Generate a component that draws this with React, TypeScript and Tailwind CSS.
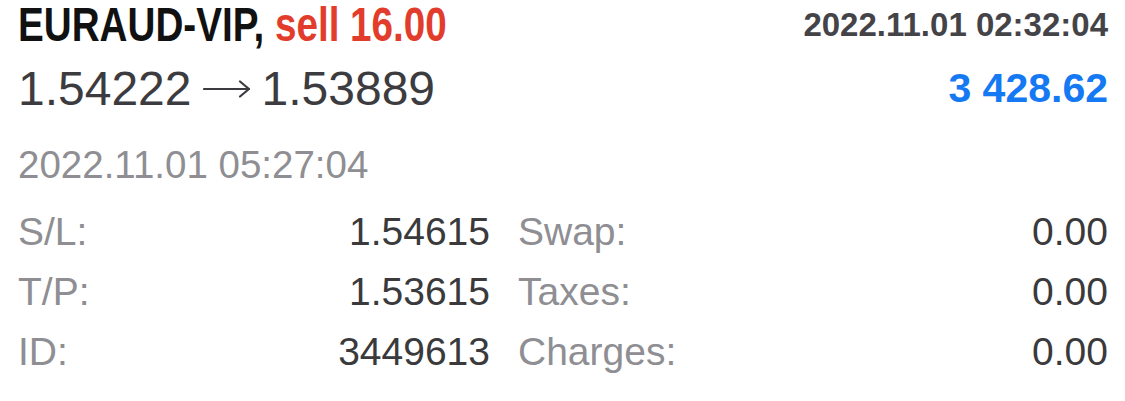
import React from 'react';

const rows = [
  { label: 'S/L:', value: '1.54615', label2: 'Swap:', value2: '0.00' },
  { label: 'T/P:', value: '1.53615', label2: 'Taxes:', value2: '0.00' },
  { label: 'ID:', value: '3449613', label2: 'Charges:', value2: '0.00' },
];

export default function App() {
  return (
    <div className="w-[1125px] h-[401px] bg-white pl-[18px] pr-[17px] font-['Liberation_Sans',Arial,sans-serif] overflow-hidden">
      {/* Symbol / type / time */}
      <div className="flex justify-between items-start h-[50px]">
        <span className="inline-block origin-left scale-x-[0.805] whitespace-nowrap text-[48px] leading-[50px] font-bold text-[#111111]">
          EURAUD-VIP, <span className="text-[#e23d2c]">sell 16.00</span>
        </span>
        <span className="text-[33px] leading-[50px] font-bold text-[#444448] whitespace-nowrap">
          2022.11.01 02:32:04
        </span>
      </div>

      {/* Prices / profit */}
      <div className="flex justify-between items-start h-[77px]">
        <div className="flex items-center h-[77px] text-[48px] leading-[77px] text-[#3c3c40] whitespace-nowrap">
          <span>1.54222</span>
          <svg width="48" height="20" viewBox="0 0 48 20" className="mx-[11px]" fill="none" stroke="#3c3c40" strokeWidth="2.2" strokeLinecap="round" strokeLinejoin="round">
            <path d="M1 10 H46" />
            <path d="M37 2.5 L46 10 L37 17.5" />
          </svg>
          <span>1.53889</span>
        </div>
        <span className="text-[41px] leading-[77px] font-bold text-[#1479f2] whitespace-nowrap">
          3 428.62
        </span>
      </div>

      <div className="text-[38.5px] leading-[75px] text-[#8e8e93]">2022.11.01 05:27:04</div>

      {rows.map((r) => (
        <div key={r.label} className="flex text-[39px] leading-[60px]">
          <div className="w-[472px] flex justify-between">
            <span className="text-[#8e8e93]">{r.label}</span>
            <span className="text-[#3a3a3c]">{r.value}</span>
          </div>
          <div className="ml-[28px] flex-1 flex justify-between">
            <span className="text-[#8e8e93]">{r.label2}</span>
            <span className="text-[#3a3a3c]">{r.value2}</span>
          </div>
        </div>
      ))}
    </div>
  );
}
